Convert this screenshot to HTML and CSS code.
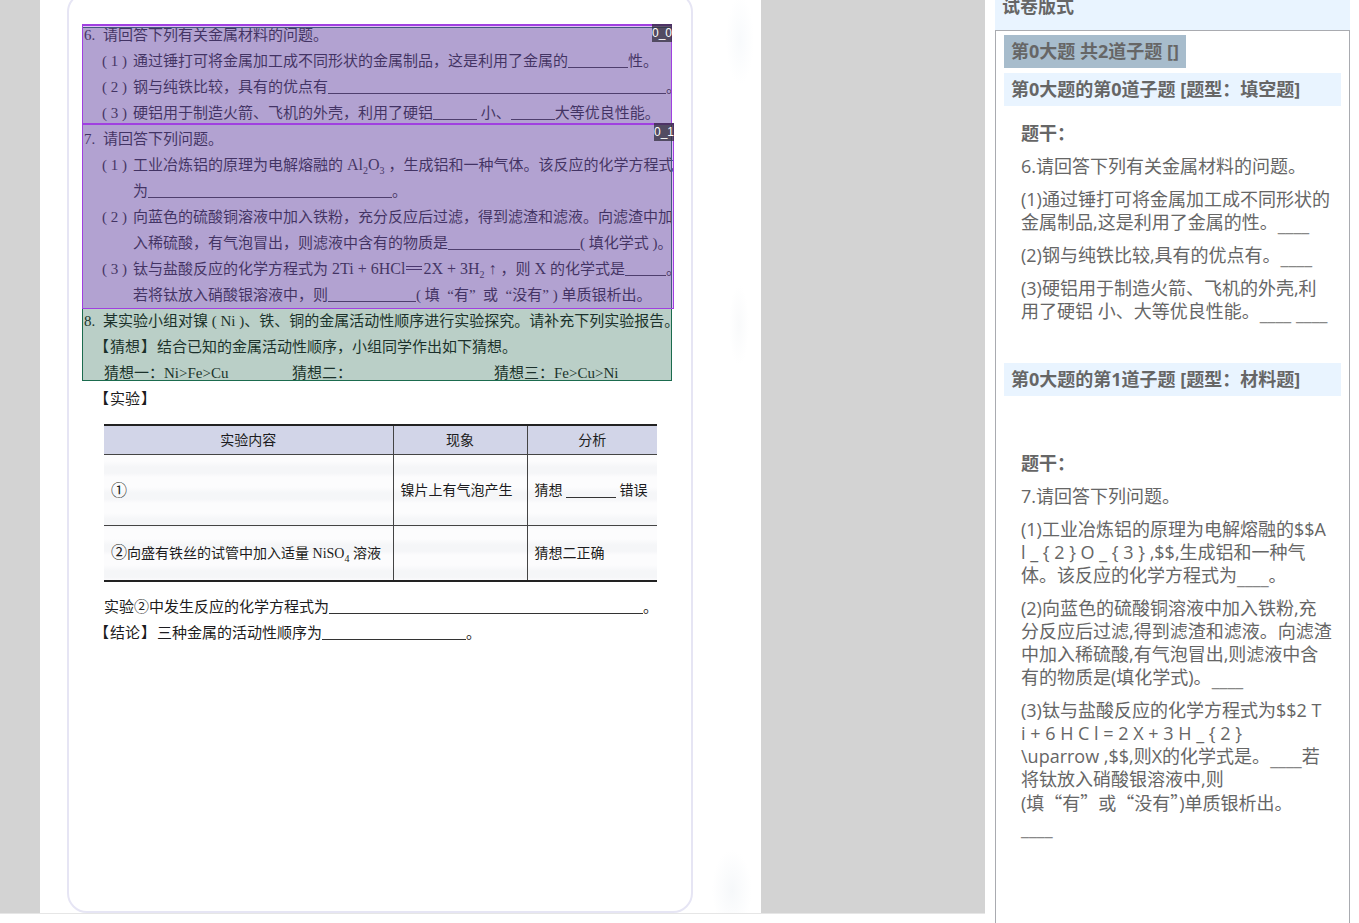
FILE: index.html
```html
<!DOCTYPE html>
<html lang="zh-CN">
<head>
<meta charset="utf-8">
<title>试卷版式</title>
<link rel="stylesheet" href="styles.css">
</head>
<body>
<main class="app">
  <section class="viewer">
    <article class="paper">
      <div class="frame">
        <div class="sheet">
          <div class="line"><span class="num">6.</span>请回答下列有关金属材料的问题。</div>
          <div class="line item"><span class="label">( 1 )</span>通过锤打可将金属加工成不同形状的金属制品，这是利用了金属的<span class="blank w60"></span>性。</div>
          <div class="line item"><span class="label">( 2 )</span>钢与纯铁比较，具有的优点有<span class="blank grow"></span>。</div>
          <div class="line item"><span class="label">( 3 )</span>硬铝用于制造火箭、飞机的外壳，利用了硬铝<span class="blank w44"></span>&nbsp;小、<span class="blank w44"></span>大等优良性能。</div>
          <div class="line"><span class="num">7.</span>请回答下列问题。</div>
          <div class="line item"><span class="label">( 1 )</span>工业冶炼铝的原理为电解熔融的<span class="formula">Al<sub>2</sub>O<sub>3</sub></span>，生成铝和一种气体。该反应的化学方程式</div>
          <div class="line cont">为<span class="blank w244"></span>。</div>
          <div class="line item"><span class="label">( 2 )</span>向蓝色的硫酸铜溶液中加入铁粉，充分反应后过滤，得到滤渣和滤液。向滤渣中加</div>
          <div class="line cont">入稀硫酸，有气泡冒出，则滤液中含有的物质是<span class="blank w132"></span>( 填化学式 )。</div>
          <div class="line item"><span class="label">( 3 )</span>钛与盐酸反应的化学方程式为<span class="formula">2Ti + 6HCl<span class="equals"></span>2X + 3H<sub>2</sub> ↑</span>，则<span class="formula">X</span>的化学式是<span class="blank grow"></span>。</div>
          <div class="line cont">若将钛放入硝酸银溶液中，则<span class="blank w88"></span>( 填&nbsp;&nbsp;“有”&nbsp;&nbsp;或&nbsp;&nbsp;“没有” )&nbsp;单质银析出。</div>
          <div class="line"><span class="num">8.</span>某实验小组对镍&nbsp;( Ni )、铁、铜的金属活动性顺序进行实验探究。请补充下列实验报告。</div>
          <div class="line head"><span class="tag">【<b>猜想</b>】</span>结合已知的金属活动性顺序，小组同学作出如下猜想。</div>
          <div class="line guesses"><span>猜想一：Ni&gt;Fe&gt;Cu</span><span>猜想二：</span><span>猜想三：Fe&gt;Cu&gt;Ni</span></div>
          <div class="line head"><span class="tag">【<b>实验</b>】</span></div>
          <table class="lab">
            <thead>
              <tr><th class="c1">实验内容</th><th class="c2">现象</th><th class="c3">分析</th></tr>
            </thead>
            <tbody>
              <tr class="r1"><td><span class="circled">①</span></td><td>镍片上有气泡产生</td><td>猜想 <span class="blank w50"></span> 错误</td></tr>
              <tr class="r2"><td><span class="circled">②</span>向盛有铁丝的试管中加入适量 NiSO<sub>4</sub> 溶液</td><td></td><td>猜想二正确</td></tr>
            </tbody>
          </table>
          <div class="line result">实验②中发生反应的化学方程式为<span class="blank w314"></span>。</div>
          <div class="line head"><span class="tag">【<b>结论</b>】</span>三种金属的活动性顺序为<span class="blank w144"></span>。</div>

          <div class="region region-green"></div>
          <div class="region region-a"><span class="badge">0_0</span></div>
          <div class="region region-b"><span class="badge">0_1</span></div>
        </div>
      </div>
    </article>
  </section>

  <aside class="panel">
    <h2 class="panel-title">试卷版式</h2>
    <div class="panel-body">
      <h3 class="group">第0大题 共2道子题 []</h3>
      <h4 class="bar">第0大题的第0道子题 [题型：填空题]</h4>
      <section class="stem">
        <h5>题干：</h5>
        <p>6.请回答下列有关金属材料的问题。</p>
        <p>(1)通过锤打可将金属加工成不同形状的<br>金属制品,这是利用了金属的性。<u>____</u></p>
        <p>(2)钢与纯铁比较,具有的优点有。<u>____</u></p>
        <p>(3)硬铝用于制造火箭、飞机的外壳,利<br>用了硬铝 小、大等优良性能。<u>____</u> <u>____</u></p>
      </section>
      <h4 class="bar">第0大题的第1道子题 [题型：材料题]</h4>
      <section class="stem stem-late">
        <h5>题干：</h5>
        <p>7.请回答下列问题。</p>
        <p>(1)工业冶炼铝的原理为电解熔融的$$A<br>l _ { 2 } O _ { 3 } ,$$,生成铝和一种气<br>体。该反应的化学方程式为<u>____</u>。</p>
        <p>(2)向蓝色的硫酸铜溶液中加入铁粉,充<br>分反应后过滤,得到滤渣和滤液。向滤渣<br>中加入稀硫酸,有气泡冒出,则滤液中含<br>有的物质是(填化学式)。<u>____</u></p>
        <p>(3)钛与盐酸反应的化学方程式为$$2 T<br>i + 6 H C l = 2 X + 3 H _ { 2 }<br>\uparrow ,$$,则X的化学式是。<u>____</u>若<br>将钛放入硝酸银溶液中,则<br>(填<q>“</q>有<q>”</q>或<q>“</q>没有<q>”</q>)单质银析出。<br><u>____</u></p>
      </section>
    </div>
  </aside>
</main>
</body>
</html>
```
FILE: styles.css
```css
* { box-sizing: border-box; }

body {
  margin: 0;
  background: #fff;
  color: #666;
  font-family: "Open Sans", "Noto Sans CJK SC", sans-serif;
  font-size: 18px;
}

.app {
  display: flex;
  gap: 10px;
  height: 100vh;
  padding-right: 9px;
  overflow: hidden;
}

/* scanned page */
.viewer {
  flex: 1;
  min-width: 0;
  display: flex;
  margin-bottom: 9px;
  padding-left: 40px;
  background: #d3d3d3;
  border-bottom: 1px solid #e6e6e6;
}

.paper {
  display: flex;
  width: 721px;
  padding: 0 68px 0 27px;
  background:
    radial-gradient(ellipse 14px 44px at 700px 40px, #f8fafc, transparent),
    radial-gradient(ellipse 10px 40px at 699px 325px, #f9fafb, transparent),
    radial-gradient(ellipse 20px 40px at 692px 890px, #f6f8fa, transparent),
    #fff;
}

.frame {
  flex: 1;
  min-width: 0;
  margin-top: -8px;
  padding: 28px 13px;
  border: 2px solid #e6e5f4;
  border-radius: 20px;
  background: #fff;
}

.sheet {
  position: relative;
  color: #1c1c20;
  font-family: "Liberation Serif", "Noto Sans CJK SC", serif;
  font-size: 15px;
}

.line {
  display: flex;
  height: 26px;
  line-height: 26px;
  padding-left: 2px;
  white-space: nowrap;
}

.num { width: 19px; flex: none; }
.item { padding-left: 20px; margin-right: -3px; }
.label { width: 31px; flex: none; }
.cont { padding-left: 51px; }
.head { padding-left: 12px; }
.result { padding-left: 22px; }

.tag { display: flex; width: 63px; }
.tag b { padding: 0 1px; font-weight: 400; }

.guesses {
  display: grid;
  grid-template-columns: 188px 202px 1fr;
  padding-left: 22px;
}

.formula { margin: 0 4px; font-size: 16px; }

sub { font-size: 10px; line-height: 1; vertical-align: -4px; }

.equals {
  display: inline-block;
  width: 16px;
  height: 4px;
  margin: 0 1px;
  border: solid #2a2438;
  border-width: 1px 0;
  vertical-align: 4px;
}

.blank {
  display: inline-block;
  flex: none;
  height: 20px;
  border-bottom: 1px solid #333;
}

.grow { flex: 1; }
.w44 { width: 44px; }
.w50 { width: 50px; }
.w60 { width: 60px; }
.w88 { width: 88px; }
.w132 { width: 132px; }
.w144 { width: 144px; }
.w244 { width: 244px; }
.w314 { width: 314px; }

.lab {
  width: 553px;
  margin: 12px 0 12px 22px;
  border-collapse: collapse;
  table-layout: fixed;
  border: solid #222;
  border-width: 2px 0;
  background: repeating-linear-gradient(#fcfcfd 0 10px, #f5f6f8 16px 22px, #fcfcfd 26px);
  font-size: 14px;
}

.lab th, .lab td {
  padding: 0 7px 2px;
  border: solid #444;
  border-width: 1px 0 1px 1px;
  text-align: left;
  font-weight: 400;
  white-space: nowrap;
}

.lab th { height: 29px; text-align: center; background: #d2d5e8; }
.lab th:first-child, .lab td:first-child { border-left: 0; }
.lab .blank { height: 14px; vertical-align: -3px; }
.circled { font-size: 16px; }
.c1 { width: 289px; }
.c2 { width: 134px; }
.r1 td { height: 71px; }
.r2 td { height: 56px; }

/* recognised regions laid over the page */
.region { position: absolute; left: 0; }

.region-green {
  top: 5px;
  width: 590px;
  height: 354px;
  border: 1px solid #1b6b4e;
  background: rgba(27, 95, 68, 0.3);
}

.region-a {
  top: 2px;
  width: 590px;
  height: 101px;
  border: 2px solid #a040e0;
  border-width: 2px 1px 1px;
  background: rgba(160, 60, 232, 0.3);
}

.region-b {
  top: 101px;
  width: 592px;
  height: 186px;
  border: 1px solid #a040e0;
  border-top-width: 2px;
  background: rgba(160, 60, 232, 0.3);
}

.badge {
  position: absolute;
  top: -2px;
  right: -1px;
  padding-top: 1px;
  background: rgba(50, 45, 60, 0.75);
  color: #fff;
  font: 12px/17px "Liberation Sans", sans-serif;
}

/* structure panel */
.panel {
  flex: none;
  display: flex;
  flex-direction: column;
  width: 355px;
}

h2, h3, h4, h5, p { margin: 0; font-size: 18px; line-height: 23px; }

.panel-title {
  height: 30px;
  padding-left: 7px;
  background: #e9f4ff;
  line-height: 12px;
}

.panel-body {
  flex: 1;
  padding: 4px 8px;
  border: 1px solid #a9abb0;
  border-bottom: 0;
  white-space: nowrap;
}

.group, .bar { padding: 5px 7px; }

.group {
  width: fit-content;
  margin-bottom: 5px;
  background: #a7bccc;
}

.bar { background: #e9f4ff; }

.stem {
  display: flex;
  flex-direction: column;
  gap: 10px;
  padding: 16px 17px 40px;
}

.stem-late { padding-top: 56px; }

u {
  color: #888;
  line-height: 1;
  text-decoration: none;
  vertical-align: -2px;
}

q {
  quotes: none;
  font-family: "Noto Sans CJK SC", sans-serif;
}
q::before, q::after { content: none; }
```
